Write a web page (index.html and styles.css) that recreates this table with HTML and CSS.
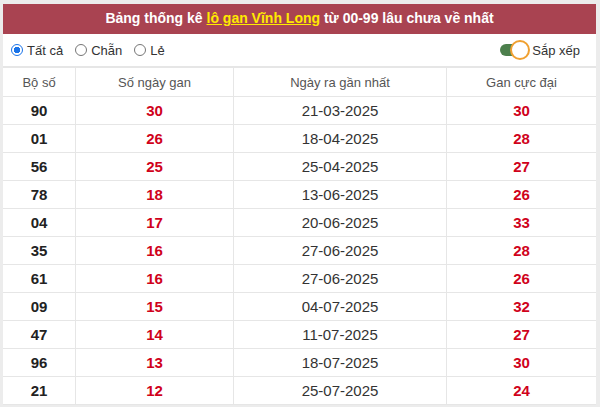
FILE: index.html
```html
<!DOCTYPE html>
<html lang="vi">
<head>
<meta charset="utf-8">
<link rel="stylesheet" href="styles.css">
</head>
<body>
<div class="box">
  <div class="title">Bảng thống kê <a href="#">lô gan Vĩnh Long</a> từ 00-99 lâu chưa về nhất</div>
  <div class="filters">
    <div class="radios">
      <label class="opt"><span class="radio on"></span>Tất cả</label>
      <label class="opt"><span class="radio"></span>Chẵn</label>
      <label class="opt"><span class="radio"></span>Lẻ</label>
    </div>
    <div class="sort"><span class="toggle"><span class="knob"></span></span>Sắp xếp</div>
  </div>
  <table class="tbl">
    <thead>
      <tr><th class="c1">Bộ số</th><th class="c2">Số ngày gan</th><th class="c3">Ngày ra gần nhất</th><th class="c4">Gan cực đại</th></tr>
    </thead>
    <tbody>
      <tr><td class="num">90</td><td class="red">30</td><td class="date">21-03-2025</td><td class="red">30</td></tr>
      <tr><td class="num">01</td><td class="red">26</td><td class="date">18-04-2025</td><td class="red">28</td></tr>
      <tr><td class="num">56</td><td class="red">25</td><td class="date">25-04-2025</td><td class="red">27</td></tr>
      <tr><td class="num">78</td><td class="red">18</td><td class="date">13-06-2025</td><td class="red">26</td></tr>
      <tr><td class="num">04</td><td class="red">17</td><td class="date">20-06-2025</td><td class="red">33</td></tr>
      <tr><td class="num">35</td><td class="red">16</td><td class="date">27-06-2025</td><td class="red">28</td></tr>
      <tr><td class="num">61</td><td class="red">16</td><td class="date">27-06-2025</td><td class="red">26</td></tr>
      <tr><td class="num">09</td><td class="red">15</td><td class="date">04-07-2025</td><td class="red">32</td></tr>
      <tr><td class="num">47</td><td class="red">14</td><td class="date">11-07-2025</td><td class="red">27</td></tr>
      <tr><td class="num">96</td><td class="red">13</td><td class="date">18-07-2025</td><td class="red">30</td></tr>
      <tr><td class="num">21</td><td class="red">12</td><td class="date">25-07-2025</td><td class="red">24</td></tr>
    </tbody>
  </table>
</div>
</body>
</html>
```
FILE: styles.css
```css
html, body { margin: 0; padding: 0; }
body {
  background: #ececec;
  font-family: "Liberation Sans", Arial, sans-serif;
  padding: 4px 4px 0 3px;
  height: 407px;
  box-sizing: border-box;
  overflow: hidden;
}
.box {
  background: #fff;
  width: 593px;
}
.title {
  background: #a94351;
  color: #fff;
  font-weight: bold;
  font-size: 14px;
  height: 30px;
  line-height: 29px;
  text-align: center;
}
.title a { color: #ffea00; text-decoration: underline; }
.filters {
  height: 32px;
  display: flex;
  align-items: center;
  justify-content: space-between;
  padding: 0 16px 0 8px;
  font-size: 13px;
  color: #333;
  border-bottom: 1px solid #e6e6e6;
}
.radios { display: flex; gap: 12px; }
.opt { display: flex; align-items: center; gap: 4px; }
.radio {
  width: 12px; height: 12px;
  border: 1px solid #767676;
  border-radius: 50%;
  box-sizing: border-box;
  display: inline-block;
}
.radio.on {
  border: 1px solid #1a73e8;
  background: radial-gradient(circle, #1a73e8 0 3px, #fff 3.5px);
}
.sort { display: flex; align-items: center; gap: 4px; }
.toggle {
  position: relative;
  width: 24px; height: 12px;
  background: #4c7f4c;
  border-radius: 6px;
  margin-right: 4px;
}
.knob {
  position: absolute;
  right: -6px; top: -4px;
  width: 20px; height: 20px;
  box-sizing: border-box;
  border: 2px solid #f0a030;
  background: #fff;
  border-radius: 50%;
}
.tbl {
  width: 593px;
  border-collapse: collapse;
  table-layout: fixed;
}
.tbl th, .tbl td {
  border: 1px solid #e6e6e6;
  text-align: center;
  padding: 0;
}
.tbl tr > :first-child { border-left: none; }
.tbl tr > :last-child { border-right: none; }
.tbl th {
  height: 28px;
  font-weight: normal;
  font-size: 13px;
  color: #555;
}
.tbl td { height: 27px; font-size: 15px; }
.c1 { width: 72px; }
.c2 { width: 157px; }
.c3 { width: 212px; }
.num { font-weight: bold; color: #222; }
.red { font-weight: bold; color: #d0021b; }
.date { color: #333; font-size: 16px; }
```
